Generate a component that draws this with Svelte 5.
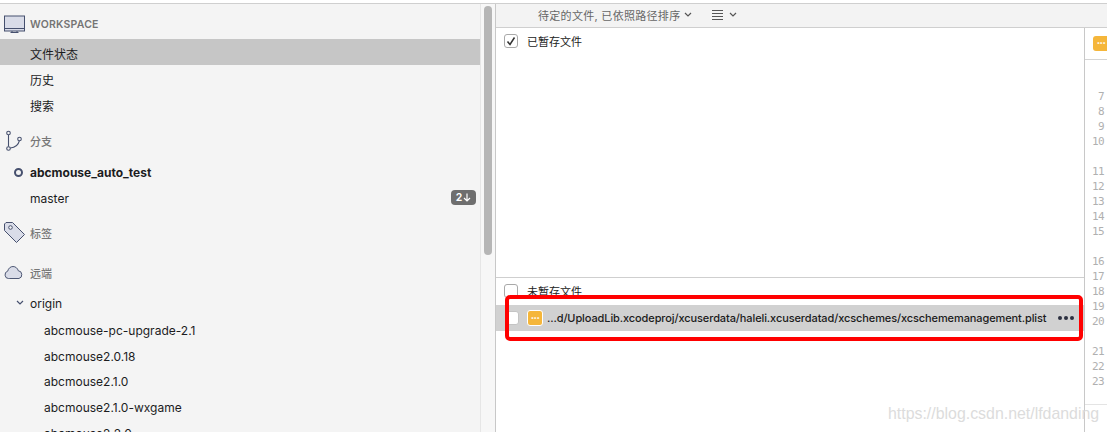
<script>
  const remotes = ['abcmouse-pc-upgrade-2.1', 'abcmouse2.0.18', 'abcmouse2.1.0', 'abcmouse2.1.0-wxgame', 'abcmouse2.2.0'];
  const lines = [7, 8, 9, 10, 0, 11, 12, 13, 14, 15, 0, 16, 17, 18, 19, 20, 0, 21, 22, 23];
</script>

<div class="window">
  <aside class="sidebar">
    <div class="head workspace">
      <svg class="ico" width="26" height="20" viewBox="0 0 26 20"><rect x="3.500" y="1" width="20" height="15" fill="#d9dce8" stroke="#46506e"/><path d="M3.500 13.500h20M11 16v1.500M16 16v1.500M9.500 17.500h8" stroke="#46506e" fill="none"/></svg>
      <span class="latin">WORKSPACE</span>
    </div>
    <div class="row selected">文件状态</div>
    <div class="row">历史</div>
    <div class="row">搜索</div>

    <div class="head branch">
      <svg class="ico" width="26" height="22" viewBox="0 0 26 22"><g fill="none" stroke="#46506e" stroke-width="1.100"><circle cx="7.500" cy="3" r="1.800"/><circle cx="7.500" cy="18.500" r="1.800"/><circle cx="18.500" cy="9" r="1.800"/><path d="M7.500 5v11.500M9.300 18c5-.5 8-3 9-7.200"/></g></svg>
      <span>分支</span>
    </div>
    <div class="row current"><i class="dot"></i>abcmouse_auto_test</div>
    <div class="row master">master<span class="badge">2<svg width="8" height="9" viewBox="0 0 8 9"><path d="M4 .5v7.500M1 5l3 3 3-3" fill="none" stroke="#fff" stroke-width="1.200"/></svg></span></div>

    <div class="head tag">
      <svg class="ico" width="26" height="24" viewBox="0 0 26 24"><path d="M5 1.500h6.500l12 12-8 8-12-12V3z" fill="#d9dce8" stroke="#46506e" stroke-linejoin="round"/><circle cx="9.500" cy="6.500" r="1.800" fill="#f4f4f4" stroke="#46506e"/></svg>
      <span>标签</span>
    </div>

    <div class="head cloud">
      <svg class="ico" width="26" height="16" viewBox="0 0 26 16"><path d="M9 13.500H7.500a3.700 3.700 0 0 1-.8-7.300C7.500 3.300 9.800 1.500 12.500 1.500c2.800 0 5 1.800 5.800 4.300a3.900 3.900 0 0 1 .7 7.700z" transform="translate(.5 0) scale(.92 1)" fill="#d9dce8" stroke="#46506e"/></svg>
      <span>远端</span>
    </div>
    <div class="row origin"><svg width="8" height="6" viewBox="0 0 8 6"><path d="M1 1l3 3 3-3" fill="none" stroke="#46506e" stroke-width="1.200"/></svg>origin</div>
    {#each remotes as r}
      <div class="row remote">{r}</div>
    {/each}
  </aside>

  <div class="scroll"><div class="thumb"></div></div>

  <main class="main">
    <div class="toolbar">
      <span class="sort">待定的文件, 已依照路径排序</span>
      <svg width="8" height="6" viewBox="0 0 8 6"><path d="M1 1l3 3 3-3" fill="none" stroke="#555" stroke-width="1.200"/></svg>
      <svg class="menu" width="11" height="10" viewBox="0 0 11 10"><path d="M0 .5h11M0 3.500h11M0 6.500h11M0 9.500h11" stroke="#555" stroke-width="1"/></svg>
      <svg width="8" height="6" viewBox="0 0 8 6"><path d="M1 1l3 3 3-3" fill="none" stroke="#555" stroke-width="1.200"/></svg>
    </div>
    <div class="body">
      <div class="files">
        <section class="staged">
          <div class="group">
            <span class="box"><svg width="10" height="10" viewBox="0 0 10 10"><path d="M1.500 5.500l2.500 3 4.500-7" fill="none" stroke="#333" stroke-width="1.500"/></svg></span>
            已暂存文件
          </div>
        </section>
        <section class="unstaged">
          <div class="group"><span class="box"></span>未暂存文件</div>
          <div class="file">
            <span class="box plain"></span>
            <span class="status">•••</span>
            <span class="path">...d/UploadLib.xcodeproj/xcuserdata/haleli.xcuserdatad/xcschemes/xcschememanagement.plist</span>
            <span class="more"><i></i><i></i><i></i></span>
          </div>
        </section>
      </div>
      <div class="diff">
        <div class="diff-head"><span class="status clipped">•••</span></div>
        <div class="gutter">
          {#each lines as n}
            <div class="ln">{n || ''}</div>
          {/each}
        </div>
        <div class="end"></div>
      </div>
    </div>
  </main>

  <div class="annotation"></div>
  <div class="watermark">https://blog.csdn.net/lfdanding</div>
</div>

<style>
  :global(body) { margin: 0; background: #fff; }
  .window {
    position: relative; display: flex; width: 1107px; height: 429px; overflow: hidden;
    border-top: 1px solid #cfcfcf; margin-top: 3px; box-sizing: border-box;
    font: 12px Inter, "Noto Sans CJK SC", sans-serif; color: #1c1c1e;
  }
  .sidebar { width: 480px; flex: none; background: #f4f4f4; overflow: hidden; }
  .row { height: 26px; padding-top: 3px; box-sizing: border-box; padding-left: 30px; white-space: nowrap; display: flex; align-items: center; }
  .head { display: flex; align-items: center; color: #777; font-size: 11px; font-weight: 500; box-sizing: border-box; }
  .ico { width: 26px; margin-left: 1px; margin-right: 3px; flex: none; }
  .latin { font-weight: 600; font-size: 10.500px; letter-spacing: .2px; color: #747474; }
  .workspace { height: 35px; padding-top: 6px; }
  .selected { background: #c6c6c6; }
  .branch { height: 42px; padding-top: 5px; }
  .current { font-weight: 700; position: relative; padding-top: 1px; }
  .dot { position: absolute; left: 14px; top: 9px; width: 5px; height: 5px; border: 2px solid #46506e; border-radius: 50%; }
  .master { position: relative; padding-top: 1px; }
  .badge {
    position: absolute; right: 4px; top: 5px; width: 25px; height: 15px; border-radius: 4px; background: #6e6e6e;
    color: #fff; font-size: 10.500px; font-weight: 600; display: flex; align-items: center; justify-content: center; gap: 1px;
  }
  .tag { height: 40px; padding-top: 3px; }
  .cloud { height: 38px; padding-top: 6px; }
  .origin { padding-left: 16px; gap: 6px; height: 27px; padding-top: 1px; }
  .remote { padding-left: 44px; height: 25.700px; }

  .scroll { width: 15px; flex: none; background: #f7f7f7; border-left: 1px solid #e6e6e6; box-sizing: border-box; }
  .thumb { width: 8px; height: 249px; margin: 2px 0 0 3px; background: #b6b6b6; border-radius: 4px; }

  .main { flex: 1; min-width: 0; display: flex; flex-direction: column; border-left: 1px solid #c8c8c8; }
  .toolbar {
    flex: none; background: #f3f3f3; border-bottom: 1px solid #cfcfcf; display: flex; align-items: center;
    padding: 0 0 2px 42px; box-sizing: content-box; color: #666; font-size: 11px; height: 21px;
  }
  .sort { margin-right: 4px; letter-spacing: .3px; }
  .menu { margin: 0 6px 0 20px; }
  .body { flex: 1; display: flex; min-height: 0; }
  .files { width: 588px; flex: none; display: flex; flex-direction: column; }
  .staged { height: 250px; border-bottom: 1px solid #cfcfcf; box-sizing: border-box; }
  .group { display: flex; align-items: center; height: 26px; padding-left: 8px; font-size: 11px; gap: 9px; color: #222; }
  .box {
    width: 12px; height: 12px; border: 1px solid #a9a9a9; border-radius: 3px; background: #fff;
    display: inline-flex; align-items: center; justify-content: center; flex: none;
  }
  .unstaged .group { height: 26px; box-sizing: border-box; }
  .file { height: 26px; margin-top: 1px; background: #d1d1d1; display: flex; align-items: center; padding-left: 9px; }
  .box.plain { border-color: #c4c4c4; }
  .status {
    width: 14px; height: 14px; margin-left: 8px; border-radius: 3px; background: #f5b63a; border: 1px solid #fff;
    color: #fff; font-size: 6px; line-height: 14px; text-align: center; flex: none; overflow: hidden; letter-spacing: -.5px;
  }
  .path { margin-left: 4px; font-size: 11px; font-weight: 500; letter-spacing: -.1px; white-space: nowrap; color: #1b1b1b; }
  .more { display: flex; gap: 2px; margin-left: 12px; }
  .more i { width: 4px; height: 4px; border-radius: 50%; background: #2c3040; }

  .diff { flex: 1; border-left: 1px solid #c8c8c8; background: #fff; position: relative; }
  .diff-head { height: 31px; border-bottom: 1px solid #d4d4d4; display: flex; align-items: center; }
  .status.clipped { margin-left: 8px; border: none; width: 16px; height: 15px; }
  .gutter { padding-top: 29px; font: 11px/15px "DejaVu Sans Mono", monospace; letter-spacing: -.6px; color: #b0b0b0; text-align: right; padding-right: 5px; }
  .ln { height: 15px; }
  .end { border-top: 1px solid #e4e4e4; margin-top: 15px; }

  .annotation {
    position: absolute; left: 505px; top: 291px; width: 578px; height: 46px; box-sizing: border-box;
    border: 4px solid #f00; border-radius: 5px;
  }
  .watermark {
    position: absolute; left: 888px; top: 401px; font: 15.900px "Liberation Sans", sans-serif; color: #dcdcdc; white-space: nowrap;
  }
</style>
